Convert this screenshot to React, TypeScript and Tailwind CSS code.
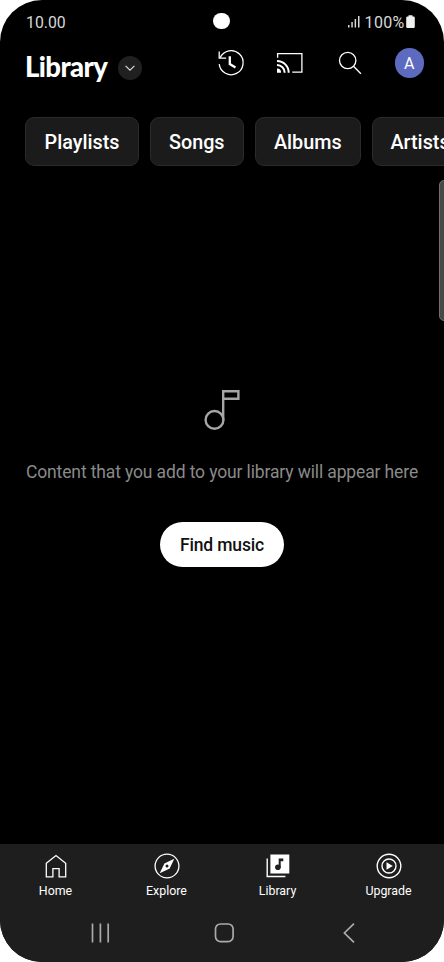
import React, { useState } from 'react';

const chips = [
  { label: 'Playlists', className: 'w-[114px]' },
  { label: 'Songs', className: 'w-[94.5px]' },
  { label: 'Albums', className: 'w-[106.5px]' },
  { label: 'Artists', className: 'w-[97px]' },
];

function SignalIcon() {
  return (
    <svg width="12" height="13" viewBox="0 0 12 13" fill="#d8d8d8">
      <path d="M0 10h1.5v2.5H0zM3.3 7h1.5v5.5H3.3zM6.6 4h1.5v8.5H6.6zM10 1h1.5v11.5H10z" />
    </svg>
  );
}

function BatteryIcon() {
  return (
    <svg width="9" height="14" viewBox="0 0 9 14" fill="#f0f0f0">
      <path d="M2.5 0.3h4v1.2h1a1.3 1.3 0 0 1 1.3 1.3v9a1.3 1.3 0 0 1-1.3 1.3h-6A1.3 1.3 0 0 1 .2 11.8v-9a1.3 1.3 0 0 1 1.3-1.3h1z" />
    </svg>
  );
}

function HistoryIcon() {
  return (
    <svg width="28" height="28" viewBox="0 0 28 28" fill="none" stroke="#fff">
      <path d="M3.2 8.7A12 12 0 1 1 2.2 15.2" strokeWidth="1.3" />
      <path d="M2.2 2.4v6.8h7" strokeWidth="1.3" />
      <path d="M12.8 7.2v7.9l5.7 3.3" strokeWidth="2.3" />
    </svg>
  );
}

function CastIcon() {
  return (
    <svg width="28" height="22" viewBox="0 0 28 22" fill="none" stroke="#fff">
      <path d="M1.6 5.8V1.6h24.3v18.6h-9.7" strokeWidth="1.3" />
      <path d="M1 8.9a11.7 11.7 0 0 1 11.7 11.8M1 13a7.7 7.7 0 0 1 7.7 7.7" strokeWidth="2" />
      <path d="M1 16.6a4.1 4.1 0 0 1 4.1 4.1H1z" fill="#fff" stroke="none" />
    </svg>
  );
}

function SearchIcon() {
  return (
    <svg width="24" height="24" viewBox="0 0 24 24" fill="none" stroke="#fff" strokeWidth="1.3">
      <circle cx="9.7" cy="9.5" r="8.2" />
      <path d="M15.5 15.3l7.4 7.4" />
    </svg>
  );
}

function NoteIcon() {
  return (
    <svg width="37" height="42" viewBox="0 0 37 42" fill="none" stroke="#a6a6a6" strokeWidth="2.4">
      <circle cx="10.5" cy="30.9" r="8.9" />
      <path d="M19.2 31.2V2.2h15.2v7.6H19.2" />
    </svg>
  );
}

function HomeIcon() {
  return (
    <svg width="28" height="28" viewBox="0 0 28 28" fill="none" stroke="#fff" strokeWidth="1.3">
      <path d="M4.3 11.3L14 3.5l9.7 7.8v13.5h-6.6v-8.2h-6.2v8.2H4.3z" />
    </svg>
  );
}

function ExploreIcon() {
  return (
    <svg width="28" height="28" viewBox="0 0 28 28">
      <circle cx="14" cy="14" r="11.9" fill="none" stroke="#fff" strokeWidth="1.3" />
      <path d="M21.3 6.8l-4.6 9.7L6.7 21.2l4.7-9.7z" fill="#fff" />
      <circle cx="14" cy="14" r="1.5" fill="#1e1e1e" />
    </svg>
  );
}

function LibraryIcon() {
  return (
    <svg width="28" height="28" viewBox="0 0 28 28">
      <path d="M6.4 2.5h18.9v18.9H6.4z" fill="#fff" />
      <path d="M3.2 6.4v18.1h18.2" fill="none" stroke="#fff" strokeWidth="1.4" />
      <circle cx="13.9" cy="15.3" r="2.8" fill="#1e1e1e" />
      <path d="M14.7 6.5h4.6v2.7h-2.6v6.3h-2z" fill="#1e1e1e" />
    </svg>
  );
}

function UpgradeIcon() {
  return (
    <svg width="28" height="28" viewBox="0 0 28 28" fill="none" stroke="#fff" strokeWidth="1.4">
      <circle cx="14" cy="14" r="11.8" />
      <circle cx="14" cy="14" r="7" />
      <path d="M11.5 10.2v7.6l6.3-3.8z" fill="#fff" stroke="none" />
    </svg>
  );
}

const tabs = [
  { label: 'Home', icon: HomeIcon },
  { label: 'Explore', icon: ExploreIcon },
  { label: 'Library', icon: LibraryIcon },
  { label: 'Upgrade', icon: UpgradeIcon },
];

export default function App() {
  const [activeTab, setActiveTab] = useState('Library');

  return (
    <div className="h-[962px] w-[444px] overflow-hidden bg-white">
      <div className="relative flex h-full flex-col overflow-hidden rounded-[42px] bg-black font-['Roboto',sans-serif] text-white">
        {/* Status bar */}
        <div className="flex h-[42px] shrink-0 items-center justify-between pt-[3px] pr-[29.5px] pl-[26px] text-base text-[#d8d8d8]">
          <span className="text-[15.8px]">10.00</span>
          <div className="flex items-center">
            <div className="-mt-[2px]"><SignalIcon /></div>
            <span className="mr-px ml-[5px] tracking-[0.3px]">100%</span>
            <div className="-mt-[2px]"><BatteryIcon /></div>
          </div>
        </div>
        {/* Camera cutout */}
        <div className="absolute top-[12.5px] left-[213px] size-[16.5px] rounded-full bg-white" />

        {/* Header */}
        <header className="flex h-[75px] shrink-0 items-start pl-[25px]">
          <h1 className="mt-[7px] w-[93px] font-['Lato',sans-serif] text-[27.5px] leading-9 font-black tracking-[-0.6px]">Library</h1>
          <button className="mt-[14px] flex size-6 items-center justify-center rounded-full bg-[#202020]">
            <svg width="10" height="6" viewBox="0 0 10 6" fill="none" stroke="#ddd" strokeWidth="1.1">
              <path d="M0.6 0.8L5 5.2l4.4-4.4" />
            </svg>
          </button>
          <div className="mt-[6px] ml-[75px] flex h-[30px] items-center">
            <HistoryIcon />
            <div className="ml-[31px]"><CastIcon /></div>
            <div className="ml-[34px]"><SearchIcon /></div>
            <div className="ml-[32.5px] flex size-[29.5px] items-center justify-center rounded-full bg-[#5c6bc0] pt-px text-base">A</div>
          </div>
        </header>

        {/* Filter chips */}
        <div className="flex shrink-0 gap-[10.5px] overflow-hidden pl-[25px]">
          {chips.map((chip) => (
            <button
              key={chip.label}
              className={`h-[49px] shrink-0 rounded-[9px] border border-[#2b2b2b] bg-[#1b1b1b] pt-[2px] text-[19.8px] font-medium ${chip.className}`}
            >
              {chip.label}
            </button>
          ))}
        </div>
        {/* Edge panel handle */}
        <div className="absolute top-[180px] -right-[6px] h-[141px] w-[11px] rounded-[5px] border border-[#707070] bg-[#484848]" />

        {/* Empty state */}
        <main className="flex flex-1 flex-col items-center pt-[223px]">
          <NoteIcon />
          <p className="mt-[29px] text-[17.5px] leading-6 tracking-[-0.13px] whitespace-nowrap text-[#8a8a8a]">
            Content that you add to your library will appear here
          </p>
          <button className="mt-[38px] h-[45px] w-[124px] rounded-full bg-white pt-[2px] text-[17.5px] font-medium tracking-[-0.15px] text-[#111]">
            Find music
          </button>
        </main>

        {/* Bottom navigation */}
        <footer className="h-[118px] shrink-0 bg-[#1e1e1e]">
          <nav className="flex">
            {tabs.map(({ label, icon: Icon }) => (
              <button
                key={label}
                aria-current={activeTab === label ? 'page' : undefined}
                onClick={() => setActiveTab(label)}
                className="flex w-[111px] flex-col items-center pt-[7.5px] text-[12.4px] leading-4"
              >
                <Icon />
                <span className="mt-[3px]">{label}</span>
              </button>
            ))}
          </nav>
          <div className="mt-[24.5px] flex items-center pl-[91px]">
            <svg width="19" height="20" viewBox="0 0 19 20" stroke="#aaa" strokeWidth="1.7">
              <path d="M1.5 0.5v19M9.4 0.5v19M17.2 0.5v19" />
            </svg>
            <svg className="ml-[104px]" width="21" height="20" viewBox="0 0 21 20" fill="none" stroke="#aaa" strokeWidth="1.7">
              <rect x="1.5" y="1" width="17.6" height="17.6" rx="5" />
            </svg>
            <svg className="ml-[108px]" width="13" height="20" viewBox="0 0 13 20" fill="none" stroke="#aaa" strokeWidth="1.7">
              <path d="M11 .7L1.4 10l9.6 9.4" />
            </svg>
          </div>
        </footer>
      </div>
    </div>
  );
}
